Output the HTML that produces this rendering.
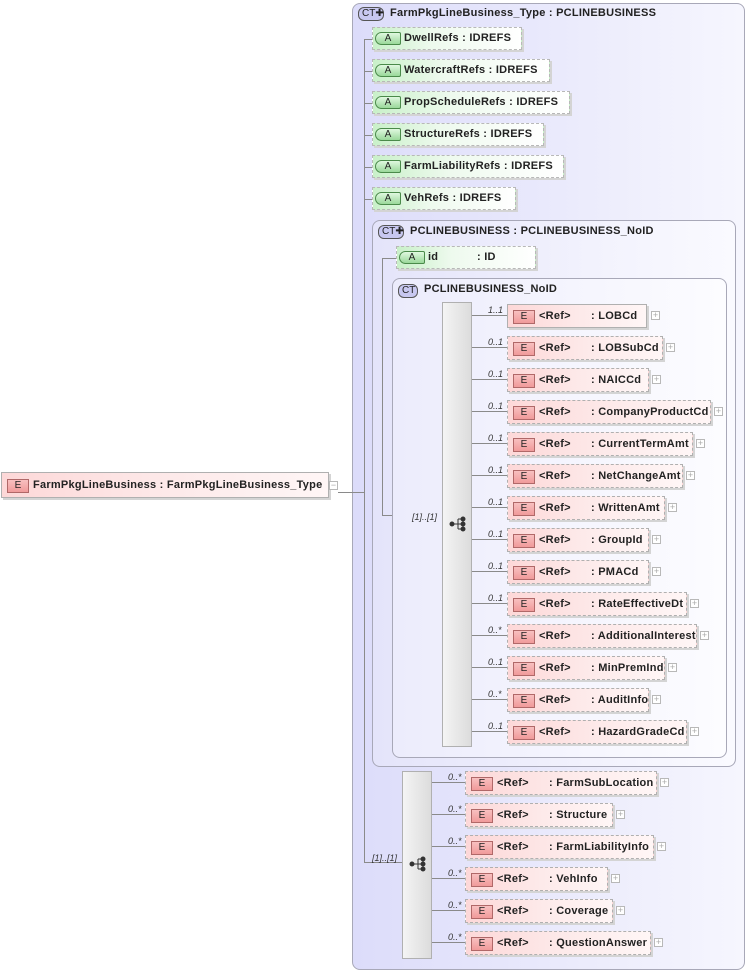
<!DOCTYPE html>
<html><head><meta charset="utf-8"><style>
body{margin:0;width:747px;height:972px;background:#fff;position:relative;overflow:hidden;font-family:"Liberation Sans",sans-serif;font-size:11px;font-weight:bold;color:#222;letter-spacing:0.25px}
div{position:absolute;box-sizing:border-box}
.ln{background:#8a8a8a}
.box{border:1px solid #a8a8b8;border-radius:8px}
.at{height:23px;border:1px dashed #b8b8b8;background:linear-gradient(90deg,#c9f0c9,#eefaee 40%,#fff);box-shadow:2px 2px 0 #d4d4d4;line-height:21px}
.at .ai{left:2px;top:4px;width:26px;height:13px;border:1px solid #4a8a4a;border-radius:7px 2px 2px 7px;background:linear-gradient(#e0f8e0,#9ad89a);font-size:10px;font-weight:normal;line-height:11px;text-align:center;letter-spacing:0}
.at span{position:absolute;left:31px;top:0}
.el{height:24px;border:1px dashed #b0b0b0;background:linear-gradient(90deg,#fdd8d8,#fde9e9 50%,#fff6f6);box-shadow:2px 2px 0 #d4d4d4;line-height:22px;white-space:nowrap}
.el.s{border-style:solid}
.el .ei{left:5px;top:5px;width:22px;height:14px;border:1px solid #b06868;background:linear-gradient(#f8c0c0,#f09a9a);font-size:10px;font-weight:normal;line-height:12px;text-align:center;letter-spacing:0}
.el .r{position:absolute;left:31px;top:0}
.el .n{position:absolute;left:83px;top:0}
.pl{width:9px;height:9px;border:1px solid #b8b8b8;background:#fff;font-size:9px;line-height:7px;text-align:center;color:#aaa;font-weight:normal;letter-spacing:0}
.c{font-size:9px;font-style:italic;font-weight:normal;color:#333;letter-spacing:0}
.seq{background:linear-gradient(90deg,#f4f4f4,#dcdcdc);border:1px solid #b0b0b0}
</style></head><body>
<div class="box" style="left:352px;top:3px;width:393px;height:967px;background:linear-gradient(90deg,#dcdcfa,#ececfc 60%,#f6f6fe)"></div>
<div style="left:358px;top:7px;width:26px;height:14px;border:1px solid #555;border-radius:6px;background:#c8c8f0;font-size:10px;line-height:12px;padding-left:3px;font-weight:normal;letter-spacing:0">CT✚</div>
<div style="left:390px;top:7px">FarmPkgLineBusiness_Type : PCLINEBUSINESS</div>
<div class="el s" style="left:1px;top:472px;width:328px;height:26px;line-height:24px"><div class="ei" style="top:6px">E</div><span class="r">FarmPkgLineBusiness : FarmPkgLineBusiness_Type</span></div>
<div class="pl" style="left:329px;top:481px">−</div>
<div class="ln" style="left:338px;top:492px;width:26px;height:1px"></div>
<div class="ln" style="left:364px;top:39px;width:1px;height:824px"></div>
<div class="ln" style="left:364px;top:862px;width:38px;height:1px"></div>
<div class="ln" style="left:364px;top:39px;width:9px;height:1px"></div>
<div class="ln" style="left:364px;top:71px;width:9px;height:1px"></div>
<div class="ln" style="left:364px;top:103px;width:9px;height:1px"></div>
<div class="ln" style="left:364px;top:135px;width:9px;height:1px"></div>
<div class="ln" style="left:364px;top:167px;width:9px;height:1px"></div>
<div class="ln" style="left:364px;top:199px;width:9px;height:1px"></div>
<div class="at" style="left:372px;top:27px;width:150px"><div class="ai">A</div><span>DwellRefs : IDREFS</span></div>
<div class="at" style="left:372px;top:59px;width:178px"><div class="ai">A</div><span>WatercraftRefs : IDREFS</span></div>
<div class="at" style="left:372px;top:91px;width:198px"><div class="ai">A</div><span>PropScheduleRefs : IDREFS</span></div>
<div class="at" style="left:372px;top:123px;width:172px"><div class="ai">A</div><span>StructureRefs : IDREFS</span></div>
<div class="at" style="left:372px;top:155px;width:192px"><div class="ai">A</div><span>FarmLiabilityRefs : IDREFS</span></div>
<div class="at" style="left:372px;top:187px;width:144px"><div class="ai">A</div><span>VehRefs : IDREFS</span></div>
<div class="box" style="left:372px;top:220px;width:364px;height:547px;background:linear-gradient(90deg,#e4e4fa,#f2f2fd 60%,#fafaff)"></div>
<div style="left:378px;top:225px;width:26px;height:14px;border:1px solid #555;border-radius:6px;background:#c8c8f0;font-size:10px;line-height:12px;padding-left:3px;font-weight:normal;letter-spacing:0">CT✚</div>
<div style="left:410px;top:225px">PCLINEBUSINESS : PCLINEBUSINESS_NoID</div>
<div class="ln" style="left:382px;top:258px;width:1px;height:258px"></div>
<div class="ln" style="left:382px;top:258px;width:15px;height:1px"></div>
<div class="ln" style="left:382px;top:515px;width:60px;height:1px"></div>
<div class="at" style="left:396px;top:246px;width:140px"><div class="ai">A</div><span>id</span><span style="left:80px">: ID</span></div>
<div class="box" style="left:392px;top:278px;width:335px;height:480px;background:linear-gradient(90deg,#ececfc,#f6f6fe 60%,#fcfcff)"></div>
<div style="left:398px;top:284px;width:20px;height:14px;border:1px solid #555;border-radius:6px;background:#c8c8f0;font-size:10px;line-height:12px;padding-left:3px;font-weight:normal;letter-spacing:0">CT</div>
<div style="left:424px;top:283px">PCLINEBUSINESS_NoID</div>
<div class="c" style="left:412px;top:512px">[1]..[1]</div>
<div class="seq" style="left:442px;top:302px;width:30px;height:445px"></div>
<svg style="position:absolute;left:449px;top:516px" width="18" height="16"><g fill="#333" stroke="#333"><circle cx="3" cy="8" r="2"/><line x1="3" y1="8" x2="9" y2="8"/><line x1="9" y1="3" x2="9" y2="13"/><line x1="9" y1="3" x2="14" y2="3"/><line x1="9" y1="8" x2="14" y2="8"/><line x1="9" y1="13" x2="14" y2="13"/><circle cx="14" cy="3" r="2"/><circle cx="14" cy="8" r="2"/><circle cx="14" cy="13" r="2"/></g></svg>
<div class="ln" style="left:472px;top:315px;width:35px;height:1px"></div><div class="c" style="left:488px;top:305px">1..1</div>
<div class="el s" style="left:507px;top:304px;width:140px"><div class="ei">E</div><span class="r">&lt;Ref&gt;</span><span class="n">: LOBCd</span></div><div class="pl" style="left:651px;top:311px">+</div>
<div class="ln" style="left:472px;top:347px;width:35px;height:1px"></div><div class="c" style="left:488px;top:337px">0..1</div>
<div class="el" style="left:507px;top:336px;width:156px"><div class="ei">E</div><span class="r">&lt;Ref&gt;</span><span class="n">: LOBSubCd</span></div><div class="pl" style="left:666px;top:343px">+</div>
<div class="ln" style="left:472px;top:379px;width:35px;height:1px"></div><div class="c" style="left:488px;top:369px">0..1</div>
<div class="el" style="left:507px;top:368px;width:142px"><div class="ei">E</div><span class="r">&lt;Ref&gt;</span><span class="n">: NAICCd</span></div><div class="pl" style="left:652px;top:375px">+</div>
<div class="ln" style="left:472px;top:411px;width:35px;height:1px"></div><div class="c" style="left:488px;top:401px">0..1</div>
<div class="el" style="left:507px;top:400px;width:204px"><div class="ei">E</div><span class="r">&lt;Ref&gt;</span><span class="n">: CompanyProductCd</span></div><div class="pl" style="left:714px;top:407px">+</div>
<div class="ln" style="left:472px;top:443px;width:35px;height:1px"></div><div class="c" style="left:488px;top:433px">0..1</div>
<div class="el" style="left:507px;top:432px;width:186px"><div class="ei">E</div><span class="r">&lt;Ref&gt;</span><span class="n">: CurrentTermAmt</span></div><div class="pl" style="left:696px;top:439px">+</div>
<div class="ln" style="left:472px;top:475px;width:35px;height:1px"></div><div class="c" style="left:488px;top:465px">0..1</div>
<div class="el" style="left:507px;top:464px;width:176px"><div class="ei">E</div><span class="r">&lt;Ref&gt;</span><span class="n">: NetChangeAmt</span></div><div class="pl" style="left:686px;top:471px">+</div>
<div class="ln" style="left:472px;top:507px;width:35px;height:1px"></div><div class="c" style="left:488px;top:497px">0..1</div>
<div class="el" style="left:507px;top:496px;width:158px"><div class="ei">E</div><span class="r">&lt;Ref&gt;</span><span class="n">: WrittenAmt</span></div><div class="pl" style="left:668px;top:503px">+</div>
<div class="ln" style="left:472px;top:539px;width:35px;height:1px"></div><div class="c" style="left:488px;top:529px">0..1</div>
<div class="el" style="left:507px;top:528px;width:142px"><div class="ei">E</div><span class="r">&lt;Ref&gt;</span><span class="n">: GroupId</span></div><div class="pl" style="left:652px;top:535px">+</div>
<div class="ln" style="left:472px;top:571px;width:35px;height:1px"></div><div class="c" style="left:488px;top:561px">0..1</div>
<div class="el" style="left:507px;top:560px;width:142px"><div class="ei">E</div><span class="r">&lt;Ref&gt;</span><span class="n">: PMACd</span></div><div class="pl" style="left:652px;top:567px">+</div>
<div class="ln" style="left:472px;top:603px;width:35px;height:1px"></div><div class="c" style="left:488px;top:593px">0..1</div>
<div class="el" style="left:507px;top:592px;width:180px"><div class="ei">E</div><span class="r">&lt;Ref&gt;</span><span class="n">: RateEffectiveDt</span></div><div class="pl" style="left:690px;top:599px">+</div>
<div class="ln" style="left:472px;top:635px;width:35px;height:1px"></div><div class="c" style="left:488px;top:625px">0..*</div>
<div class="el" style="left:507px;top:624px;width:190px"><div class="ei">E</div><span class="r">&lt;Ref&gt;</span><span class="n">: AdditionalInterest</span></div><div class="pl" style="left:700px;top:631px">+</div>
<div class="ln" style="left:472px;top:667px;width:35px;height:1px"></div><div class="c" style="left:488px;top:657px">0..1</div>
<div class="el" style="left:507px;top:656px;width:158px"><div class="ei">E</div><span class="r">&lt;Ref&gt;</span><span class="n">: MinPremInd</span></div><div class="pl" style="left:668px;top:663px">+</div>
<div class="ln" style="left:472px;top:699px;width:35px;height:1px"></div><div class="c" style="left:488px;top:689px">0..*</div>
<div class="el" style="left:507px;top:688px;width:142px"><div class="ei">E</div><span class="r">&lt;Ref&gt;</span><span class="n">: AuditInfo</span></div><div class="pl" style="left:652px;top:695px">+</div>
<div class="ln" style="left:472px;top:731px;width:35px;height:1px"></div><div class="c" style="left:488px;top:721px">0..1</div>
<div class="el" style="left:507px;top:720px;width:180px"><div class="ei">E</div><span class="r">&lt;Ref&gt;</span><span class="n">: HazardGradeCd</span></div><div class="pl" style="left:690px;top:727px">+</div>
<div class="c" style="left:372px;top:853px">[1]..[1]</div>
<div class="seq" style="left:402px;top:771px;width:30px;height:188px"></div>
<svg style="position:absolute;left:409px;top:856px" width="18" height="16"><g fill="#333" stroke="#333"><circle cx="3" cy="8" r="2"/><line x1="3" y1="8" x2="9" y2="8"/><line x1="9" y1="3" x2="9" y2="13"/><line x1="9" y1="3" x2="14" y2="3"/><line x1="9" y1="8" x2="14" y2="8"/><line x1="9" y1="13" x2="14" y2="13"/><circle cx="14" cy="3" r="2"/><circle cx="14" cy="8" r="2"/><circle cx="14" cy="13" r="2"/></g></svg>
<div class="ln" style="left:432px;top:782px;width:33px;height:1px"></div><div class="c" style="left:448px;top:772px">0..*</div>
<div class="el" style="left:465px;top:771px;width:192px"><div class="ei">E</div><span class="r">&lt;Ref&gt;</span><span class="n">: FarmSubLocation</span></div><div class="pl" style="left:660px;top:778px">+</div>
<div class="ln" style="left:432px;top:814px;width:33px;height:1px"></div><div class="c" style="left:448px;top:804px">0..*</div>
<div class="el" style="left:465px;top:803px;width:148px"><div class="ei">E</div><span class="r">&lt;Ref&gt;</span><span class="n">: Structure</span></div><div class="pl" style="left:616px;top:810px">+</div>
<div class="ln" style="left:432px;top:846px;width:33px;height:1px"></div><div class="c" style="left:448px;top:836px">0..*</div>
<div class="el" style="left:465px;top:835px;width:189px"><div class="ei">E</div><span class="r">&lt;Ref&gt;</span><span class="n">: FarmLiabilityInfo</span></div><div class="pl" style="left:657px;top:842px">+</div>
<div class="ln" style="left:432px;top:878px;width:33px;height:1px"></div><div class="c" style="left:448px;top:868px">0..*</div>
<div class="el" style="left:465px;top:867px;width:143px"><div class="ei">E</div><span class="r">&lt;Ref&gt;</span><span class="n">: VehInfo</span></div><div class="pl" style="left:611px;top:874px">+</div>
<div class="ln" style="left:432px;top:910px;width:33px;height:1px"></div><div class="c" style="left:448px;top:900px">0..*</div>
<div class="el" style="left:465px;top:899px;width:148px"><div class="ei">E</div><span class="r">&lt;Ref&gt;</span><span class="n">: Coverage</span></div><div class="pl" style="left:616px;top:906px">+</div>
<div class="ln" style="left:432px;top:942px;width:33px;height:1px"></div><div class="c" style="left:448px;top:932px">0..*</div>
<div class="el" style="left:465px;top:931px;width:186px"><div class="ei">E</div><span class="r">&lt;Ref&gt;</span><span class="n">: QuestionAnswer</span></div><div class="pl" style="left:654px;top:938px">+</div>
</body></html>
